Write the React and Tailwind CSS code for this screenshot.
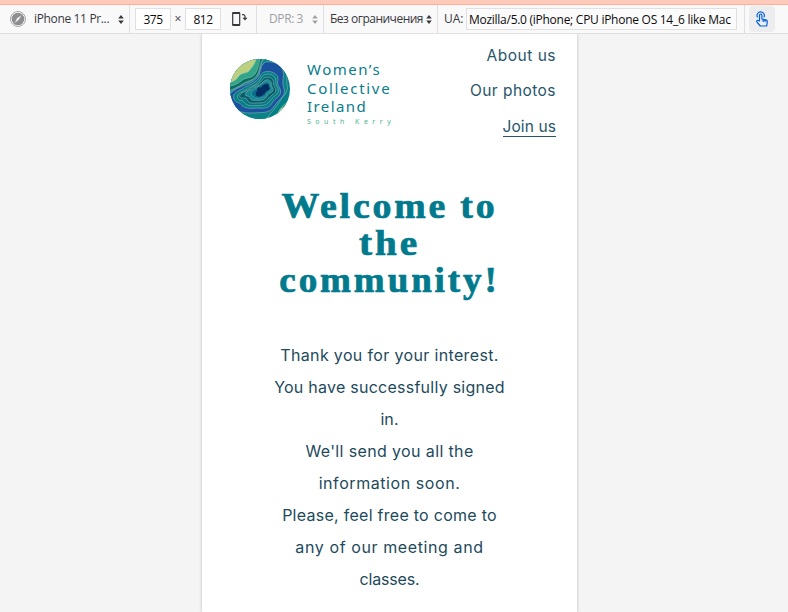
import React from "react";

const bodyLines = [
  ["Thank you for your interest.", "tracking-[0.35px]"],
  ["You have successfully signed", "tracking-[0.25px]"],
  ["in.", "tracking-[0.1px]"],
  ["We'll send you all the", "tracking-[0.37px]"],
  ["information soon.", "tracking-[0.57px]"],
  ["Please, feel free to come to", "tracking-[0.27px]"],
  ["any of our meeting and", "tracking-[0.6px]"],
  ["classes.", "tracking-[-0.15px]"],
];

function Arrows() {
  return (
    <svg className="h-[9px] w-[6px] shrink-0" viewBox="0 0 6 9" fill="currentColor">
      <path d="M3 0 5.8 3.6H.2zM3 9 .2 5.4h5.6z" />
    </svg>
  );
}

function Toolbar() {
  return (
    <div className="flex h-[29px] shrink-0 border-b border-[#e0e0e2] bg-[#f9f9fa] font-['Open_Sans','Noto_Sans',sans-serif] text-[12px] leading-[28px] text-[#38383d]">
      <div className="flex w-[130px] shrink-0 items-center border-r border-[#e0e0e2] pl-[10px]">
        <svg className="h-4 w-4 shrink-0" viewBox="0 0 16 16">
          <circle cx="8" cy="8" r="7.5" fill="#fff" stroke="#a5a5a7" />
          <circle cx="8" cy="8" r="6.3" fill="#8e8e91" />
          <path d="M4.6 12 7.2 7.2 11.6 4 8.8 8.8z" fill="#f4f4f4" />
        </svg>
        <span className="ml-2 w-[84px] whitespace-nowrap tracking-[-0.35px]">iPhone 11 Pr...</span>
        <Arrows />
      </div>
      <div className="flex w-[127px] shrink-0 items-center border-r border-[#e0e0e2] pl-[5px]">
        <div className="h-[22px] w-9 border border-[#e0e0e2] bg-white text-center leading-[21px] tracking-[-0.5px] text-[#0c0c0d]">375</div>
        <span className="w-[14px] text-center">×</span>
        <div className="h-[22px] w-9 border border-[#e0e0e2] bg-white text-center leading-[21px] tracking-[-0.5px] text-[#0c0c0d]">812</div>
        <svg className="ml-[11px] h-4 w-4" viewBox="0 0 16 16" fill="none" stroke="#38383d" strokeWidth="1.2">
          <rect x=".7" y="1.7" width="7" height="12.6" rx=".5" />
          <path d="M.7 2.2h7M.7 13.8h7" strokeWidth="1.8" />
          <path d="M10 3.6h1.3Q13 3.6 13 5.5V8" />
          <path d="M10.5 6.8h5L13 9.5z" fill="#38383d" stroke="none" />
        </svg>
      </div>
      <div className="flex w-[67px] shrink-0 items-center border-r border-[#e0e0e2] pl-3 text-[#a0a0a3]">
        <span className="w-[43px] whitespace-nowrap tracking-[-0.4px]">DPR: 3</span>
        <Arrows />
      </div>
      <div className="flex w-[114px] shrink-0 items-center border-r border-[#e0e0e2] pl-[6px]">
        <span className="w-[96px] whitespace-nowrap tracking-[-0.5px]">Без ограничения</span>
        <Arrows />
      </div>
      <div className="flex w-[307px] shrink-0 items-center border-r border-[#e0e0e2] pl-[6px]">
        <span className="w-[22px] whitespace-nowrap">UA:</span>
        <div className="h-[22px] w-[271px] overflow-hidden whitespace-nowrap border border-[#e0e0e2] bg-[#fbfbfb] pl-[2px] leading-[21px] tracking-[-0.27px] text-[#0c0c0d]">
          Mozilla/5.0 (iPhone; CPU iPhone OS 14_6 like Mac
        </div>
      </div>
      <div className="ml-1 mt-px flex h-[26px] w-[26px] items-center justify-center rounded-sm bg-[#ededf0]">
        <svg className="h-4 w-4" viewBox="0 0 16 16" fill="none" stroke="#0060df" strokeWidth="1.2" strokeLinecap="round" strokeLinejoin="round">
          <path d="M5.5 10V4.2a1.2 1.2 0 0 1 2.4 0V8l4 .8q1.6.4 1.4 2L12.7 15H6.3L3 11.1q-.6-1 .2-1.6.8-.5 1.5.2zM9.2 8.4v2M11.1 8.8v1.8" />
          <path d="M3.3 6A3.7 3.7 0 1 1 10.1 6" />
        </svg>
      </div>
    </div>
  );
}

function Emblem() {
  return (
    <svg className="h-[60px] w-[60px] shrink-0" viewBox="30 27 180 180">
      <clipPath id="disc">
        <circle cx="120" cy="117" r="90" />
      </clipPath>
      <g clipPath="url(#disc)" stroke="#9cc4bd" strokeWidth="1.5" strokeLinejoin="round">
        <path fill="#057f87" d="M20 20H220V220H20z" />
        <path fill="#0b6b62" d="M20 124C48 115 58 108 71 100C87 90 103 91 112 74C122 56 118 39 132 20H20z" />
        <path fill="#32a688" d="M20 110C48 106 53 101 65 92C79 80 98 87 108 68C116 54 116 39 122 20H20z" />
        <path fill="#bdcf80" d="M20 98C43 98 51 86 57 78C66 66 79 72 88 62C97 51 101 48 112 20H20z" />
        <path fill="#0a8288" d="M24 130C54 112 66 104 78 98C96 93 108 86 117 68C123 54 121 35 137 22L205 40C200 70 200 88 201 105C208 128 186 139 180 153C167 177 154 184 143 202L120 220L20 200z" />
        <path fill="#1b529f" d="M26 139C34 122 51 115 68 108C83 101 105 97 117 75C123 58 123 41 139 35C161 36 178 38 187 58C196 76 184 93 191 112C200 135 181 145 170 159C153 180 152 188 115 188C86 190 66 190 46 178z" />
        <path fill="#057f87" d="M42 147C34 128 58 123 73 113C89 103 109 99 119 80C124 68 135 62 151 65C173 71 176 81 173 95C170 105 182 113 182 126C181 141 164 145 157 158C149 174 134 176 112 174C84 177 70 173 63 163C57 155 48 161 42 147z" />
        <path fill="#087783" d="M53 145C47 130 67 127 82 117C96 108 112 104 121 88C127 76 138 69 151 73C166 78 169 88 167 99C168 108 177 114 175 125C172 136 159 138 151 151C141 168 126 166 108 167C86 169 76 164 70 154C64 149 58 154 53 145z" />
        <path fill="#065c6b" d="M59 139C59 127 79 126 90 117C102 107 116 106 125 92C132 82 143 79 152 84C161 89 161 96 160 104C165 113 170 118 166 127C160 135 150 136 143 148C132 161 122 158 108 159C91 161 83 157 80 146C74 141 62 149 59 139z" />
        <path fill="#138895" d="M76 134C76 122 94 122 101 114C113 106 121 106 129 96C137 88 145 87 151 93C157 99 151 106 157 112C161 119 160 125 150 129C142 132 140 145 132 148C120 153 113 150 105 151C91 151 91 147 88 140C84 137 77 140 76 134z" />
        <path fill="#0a6f8a" strokeWidth="1" d="M94 131C94 122 106 120 114 111C124 103 132 96 141 95C151 97 148 106 153 113C154 121 146 124 140 129C138 140 127 142 117 144C106 146 103 144 99 138C95 137 94 135 94 131z" />
        <path fill="#052f63" stroke="none" d="M107 132Q106 125 113 124Q108 112 118 112Q125 115 127 108Q135 99 144 103Q149 106 147 112Q153 117 145 121Q136 124 134 131Q129 132 126 137Q115 143 111 138Q107 137 107 132z" />
        <path fill="#32a688" d="M155 215C165 192 173 193 178 181C187 169 191 161 216 151V215z" />
        <path fill="#bdcf80" d="M164 215C173 199 171 189 183 176C193 172 197 166 214 164V215z" />
      </g>
    </svg>
  );
}

function SiteHeader() {
  return (
    <header className="flex h-[116px] justify-between pl-[28px] pr-[21px]">
      <div className="flex pt-[25px]">
        <Emblem />
        <div className="ml-[17px] whitespace-nowrap pt-px font-['Noto_Sans',sans-serif] text-[15px] leading-[18.5px] text-[#087c8b]">
          <div className="tracking-[1.5px]">Women’s</div>
          <div className="tracking-[1.7px]">Collective</div>
          <div className="tracking-[1.4px]">Ireland</div>
          <div className="pt-px text-[7px] leading-[9px] tracking-[4.5px] text-[#48b493]">South Kerry</div>
        </div>
      </div>
      <nav className="flex flex-col items-end whitespace-nowrap pt-[10px] font-['Inter',sans-serif] text-[15.5px] leading-6 text-[#27566b]">
        <a className="tracking-[0.5px]">About us</a>
        <a className="mt-[11px] tracking-[0.45px]">Our photos</a>
        <a className="mt-[14px] h-[20px] border-b border-[#27566b] leading-[20px] tracking-[0.1px]">Join us</a>
      </nav>
    </header>
  );
}

export default function App() {
  return (
    <div className="flex h-[612px] w-[788px] flex-col overflow-hidden bg-[#f4f4f4]">
      <div className="h-[5px] shrink-0 border-b border-[#ffad94] bg-[#ffcab9]" />
      <Toolbar />
      <main className="ml-[202px] w-[375px] flex-1 bg-white shadow-[0_0_3px_rgba(0,0,0,0.25)] [clip-path:inset(0_-5px)]">
        <SiteHeader />
        <h1 className="mt-[38px] text-center font-['Liberation_Serif',serif] text-[35px] font-bold leading-[37px] text-[#007a8c] [-webkit-text-stroke:0.7px_#007a8c]">
          <span className="block scale-x-[1.08] tracking-[2.6px]">Welcome to</span>
          <span className="block scale-x-[1.12] tracking-[2.6px]">the</span>
          <span className="block scale-x-[1.06] tracking-[2.7px]">community!</span>
        </h1>
        <div className="mt-[40px] text-center font-['Inter',sans-serif] text-[16px] leading-8 text-[#1d4a5c]">
          {bodyLines.map(([text, tracking]) => (
            <p key={text} className={"whitespace-nowrap " + tracking}>{text}</p>
          ))}
        </div>
      </main>
    </div>
  );
}
